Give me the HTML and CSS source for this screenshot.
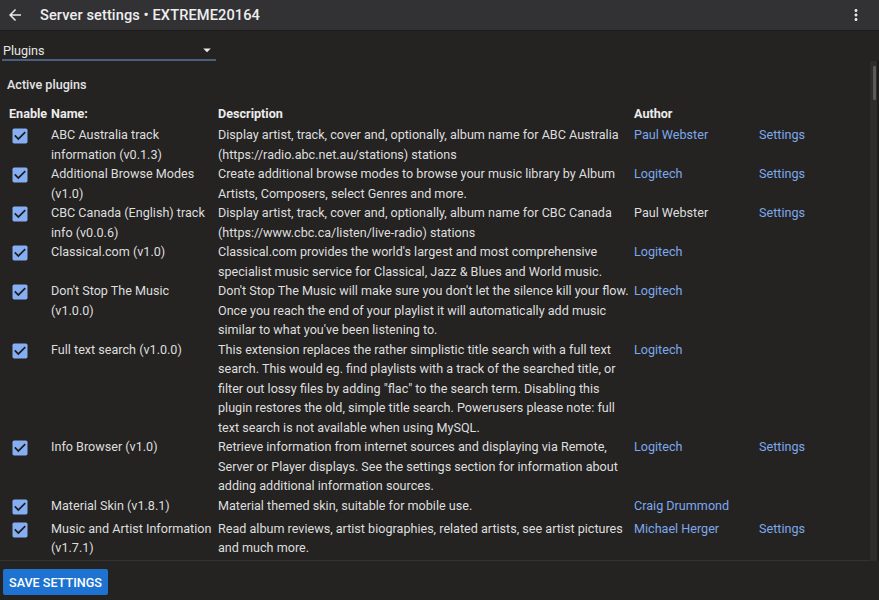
FILE: index.html
```html
<!DOCTYPE html>
<html lang="en">
<head>
<meta charset="utf-8">
<title>Server settings</title>
<link rel="stylesheet" href="styles.css">
</head>
<body>
<header class="toolbar">
  <svg class="tb-icon back" viewBox="0 0 24 24"><path d="M20 11H7.83l5.59-5.59L12 4l-8 8 8 8 1.41-1.41L7.83 13H20v-2z"/></svg>
  <div class="title">Server settings • EXTREME20164</div>
  <svg class="tb-icon menu" viewBox="0 0 24 24"><path d="M12 8c1.1 0 2-.9 2-2s-.9-2-2-2-2 .9-2 2 .9 2 2 2zm0 2c-1.1 0-2 .9-2 2s.9 2 2 2 2-.9 2-2-.9-2-2-2zm0 6c-1.1 0-2 .9-2 2s.9 2 2 2 2-.9 2-2-.9-2-2-2z"/></svg>
</header>

<div class="select-row">
  <div class="select">
    <span>Plugins</span>
    <svg class="caret" viewBox="0 0 24 24"><path d="M7 10l5 5 5-5z"/></svg>
  </div>
</div>

<div class="content">
<main class="scroll">
  <div class="section-title">Active plugins</div>
  <table class="plugins">
    <colgroup>
      <col class="c-en"><col class="c-name"><col class="c-desc"><col class="c-auth"><col class="c-set">
    </colgroup>
    <thead>
      <tr><th>Enable</th><th>Name:</th><th>Description</th><th>Author</th><th></th></tr>
    </thead>
    <tbody>
      <tr><td class="cb"><svg viewBox="0 0 24 24"><rect x="3" y="3" width="18" height="18" rx="2"/><path d="M10 17l-5-5 1.41-1.41L10 14.17l7.59-7.59L19 8l-9 9z"/></svg></td><td>ABC Australia track information (v0.1.3)</td><td>Display artist, track, cover and, optionally, album name for ABC Australia (https://radio.abc.net.au/stations) stations</td><td><a>Paul Webster</a></td><td><a>Settings</a></td></tr>
      <tr><td class="cb"><svg viewBox="0 0 24 24"><rect x="3" y="3" width="18" height="18" rx="2"/><path d="M10 17l-5-5 1.41-1.41L10 14.17l7.59-7.59L19 8l-9 9z"/></svg></td><td>Additional Browse Modes (v1.0)</td><td>Create additional browse modes to browse your music library by Album Artists, Composers, select Genres and more.</td><td><a>Logitech</a></td><td><a>Settings</a></td></tr>
      <tr><td class="cb"><svg viewBox="0 0 24 24"><rect x="3" y="3" width="18" height="18" rx="2"/><path d="M10 17l-5-5 1.41-1.41L10 14.17l7.59-7.59L19 8l-9 9z"/></svg></td><td>CBC Canada (English) track info (v0.0.6)</td><td>Display artist, track, cover and, optionally, album name for CBC Canada (https://www.cbc.ca/listen/live-radio) stations</td><td>Paul Webster</td><td><a>Settings</a></td></tr>
      <tr><td class="cb"><svg viewBox="0 0 24 24"><rect x="3" y="3" width="18" height="18" rx="2"/><path d="M10 17l-5-5 1.41-1.41L10 14.17l7.59-7.59L19 8l-9 9z"/></svg></td><td>Classical.com (v1.0)</td><td>Classical.com provides the world's largest and most comprehensive specialist music service for Classical, Jazz &amp; Blues and World music.</td><td><a>Logitech</a></td><td></td></tr>
      <tr><td class="cb"><svg viewBox="0 0 24 24"><rect x="3" y="3" width="18" height="18" rx="2"/><path d="M10 17l-5-5 1.41-1.41L10 14.17l7.59-7.59L19 8l-9 9z"/></svg></td><td>Don't Stop The Music (v1.0.0)</td><td>Don't Stop The Music will make sure you don't let the silence kill your flow. Once you reach the end of your playlist it will automatically add music similar to what you've been listening to.</td><td><a>Logitech</a></td><td></td></tr>
      <tr><td class="cb"><svg viewBox="0 0 24 24"><rect x="3" y="3" width="18" height="18" rx="2"/><path d="M10 17l-5-5 1.41-1.41L10 14.17l7.59-7.59L19 8l-9 9z"/></svg></td><td>Full text search (v1.0.0)</td><td>This extension replaces the rather simplistic title search with a full text search. This would eg. find playlists with a track of the searched title, or filter out lossy files by adding "flac" to the search term. Disabling this plugin restores the old, simple title search. Powerusers please note: full text search is not available when using MySQL.</td><td><a>Logitech</a></td><td></td></tr>
      <tr><td class="cb"><svg viewBox="0 0 24 24"><rect x="3" y="3" width="18" height="18" rx="2"/><path d="M10 17l-5-5 1.41-1.41L10 14.17l7.59-7.59L19 8l-9 9z"/></svg></td><td>Info Browser (v1.0)</td><td>Retrieve information from internet sources and displaying via Remote, Server or Player displays. See the settings section for information about adding additional information sources.</td><td><a>Logitech</a></td><td><a>Settings</a></td></tr>
      <tr><td class="cb"><svg viewBox="0 0 24 24"><rect x="3" y="3" width="18" height="18" rx="2"/><path d="M10 17l-5-5 1.41-1.41L10 14.17l7.59-7.59L19 8l-9 9z"/></svg></td><td>Material Skin (v1.8.1)</td><td>Material themed skin, suitable for mobile use.</td><td><a>Craig Drummond</a></td><td></td></tr>
      <tr><td class="cb"><svg viewBox="0 0 24 24"><rect x="3" y="3" width="18" height="18" rx="2"/><path d="M10 17l-5-5 1.41-1.41L10 14.17l7.59-7.59L19 8l-9 9z"/></svg></td><td>Music and Artist Information (v1.7.1)</td><td>Read album reviews, artist biographies, related artists, see artist pictures and much more.</td><td><a>Michael Herger</a></td><td><a>Settings</a></td></tr>
      <tr><td class="cb"><svg viewBox="0 0 24 24"><rect x="3" y="3" width="18" height="18" rx="2"/><path d="M10 17l-5-5 1.41-1.41L10 14.17l7.59-7.59L19 8l-9 9z"/></svg></td><td>Online Music Library Integration (v1.0)</td><td>Integrate online music libraries with your local music library.</td><td><a>Logitech</a></td><td><a>Settings</a></td></tr>
      <tr><td class="cb"><svg viewBox="0 0 24 24"><rect x="3" y="3" width="18" height="18" rx="2"/><path d="M10 17l-5-5 1.41-1.41L10 14.17l7.59-7.59L19 8l-9 9z"/></svg></td><td>Podcasts (v1.0)</td><td>Browse, search and subscribe to podcasts.</td><td><a>Logitech</a></td><td><a>Settings</a></td></tr>
      <tr><td class="cb"><svg viewBox="0 0 24 24"><rect x="3" y="3" width="18" height="18" rx="2"/><path d="M10 17l-5-5 1.41-1.41L10 14.17l7.59-7.59L19 8l-9 9z"/></svg></td><td>Random Mix (v1.0)</td><td>Create random mixes of songs, albums, artists, years or genres from your music library.</td><td><a>Logitech</a></td><td><a>Settings</a></td></tr>
    </tbody>
  </table>
</main>
<div class="rail"><div class="thumb"></div></div>
</div>

<footer class="footer">
  <button class="save">Save Settings</button>
</footer>
</body>
</html>
```
FILE: styles.css
```css
* { box-sizing: border-box; }

html, body {
  margin: 0;
  height: 100%;
}

body {
  display: flex;
  flex-direction: column;
  background: #242322;
  color: #dedede;
  font-family: Roboto, "Noto Sans", sans-serif;
  font-size: 12.6px;
  overflow: hidden;
}

.toolbar {
  flex: 0 0 auto;
  height: 31px;
  display: flex;
  align-items: center;
  background: #323235;
  border-bottom: 1px solid #1b1b1c;
  padding: 0 14px 0 6px;
}

.tb-icon {
  width: 18px;
  height: 18px;
  fill: #e8e8e8;
}

.back { margin-right: 16px; }

.title {
  flex: 1;
  font-size: 14.6px;
  font-weight: 500;
  color: #eeeeee;
  letter-spacing: 0.1px;
}

.select-row {
  flex: 0 0 auto;
  padding: 0 2px;
}

.select {
  width: 214px;
  height: 30px;
  display: flex;
  align-items: flex-end;
  justify-content: space-between;
  padding: 0 0 1px 1px;
  border-bottom: 2px solid #4a5f7e;
  color: #e6e6e6;
}

.caret {
  width: 18px;
  height: 18px;
  fill: #eeeeee;
  margin: 0 0 -1px 0;
}

.content {
  flex: 1 1 auto;
  min-height: 0;
  display: flex;
}

.scroll {
  flex: 1 1 auto;
  min-width: 0;
  overflow-y: auto;
  scrollbar-width: none;
  padding: 14px 0 0 7px;
  border-bottom: 1px solid #333333;
}

.rail {
  flex: 0 0 9px;
  background: #2d2d2d;
  border-right: 2px solid #1c1c1c;
  padding: 5px 1px 0 3px;
}

.thumb {
  height: 34px;
  background: #5a5a5a;
  border-radius: 1px;
}

.section-title {
  line-height: 19px;
  color: #e4e4e4;
  font-weight: 500;
  padding-bottom: 10px;
}

.plugins {
  border-collapse: collapse;
  table-layout: fixed;
  width: 850px;
  margin-bottom: 14px;
}

.c-en { width: 42px; }
.c-name { width: 167px; }
.c-desc { width: 416px; }
.c-auth { width: 125px; }
.c-set { width: 100px; }

.plugins th {
  text-align: left;
  font-weight: 700;
  color: #ececec;
  padding: 0 2px 2px 2px;
  line-height: 19.3px;
}

.plugins td {
  vertical-align: top;
  padding: 0 2px;
  line-height: 19.5px;
}

.plugins td.cb {
  padding: 1px 0 2px 3px;
  line-height: 0;
}

.cb svg {
  width: 20px;
  height: 20px;
}

.cb rect { fill: #86aef3; }
.cb path { fill: #1e1e1e; }

.plugins a {
  color: #7da8ec;
  cursor: pointer;
}

.footer {
  flex: 0 0 auto;
  height: 39px;
  padding: 8px 3px 5px;
}

.save {
  height: 26px;
  padding: 0 6px;
  border: none;
  border-radius: 2px;
  background: #1e73d1;
  color: #ffffff;
  font-family: Roboto, "Noto Sans", sans-serif;
  font-size: 12.6px;
  font-weight: 500;
  text-transform: uppercase;
  letter-spacing: 0;
}
```
